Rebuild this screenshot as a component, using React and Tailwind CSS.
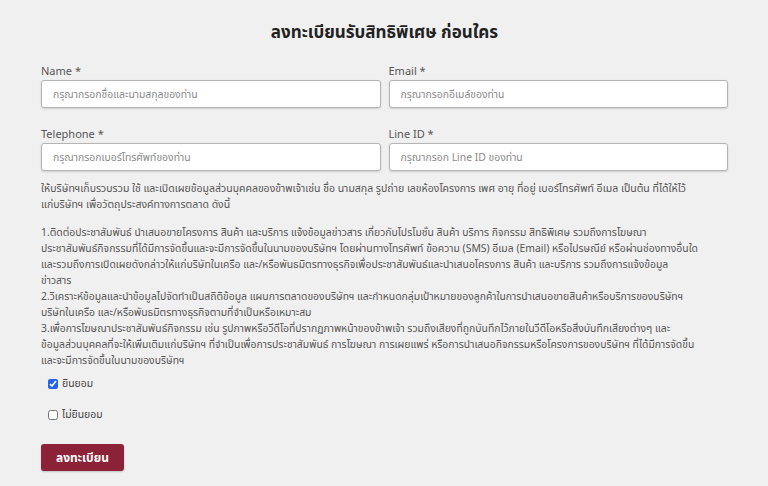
export default function App() {
  const font = { fontFamily: '"Noto Sans", "Noto Sans Thai", sans-serif' };
  const list = [
    "1.ติดต่อประชาสัมพันธ์ นำเสนอขายโครงการ สินค้า และบริการ แจ้งข้อมูลข่าวสาร เกี่ยวกับโปรโมชั่น สินค้า บริการ กิจกรรม สิทธิพิเศษ รวมถึงการโฆษณา",
    "ประชาสัมพันธ์กิจกรรมที่ได้มีการจัดขึ้นและจะมีการจัดขึ้นในนามของบริษัทฯ โดยผ่านทางโทรศัพท์ ข้อความ (SMS) อีเมล (Email) หรือไปรษณีย์ หรือผ่านช่องทางอื่นใด",
    "และรวมถึงการเปิดเผยดังกล่าวให้แก่บริษัทในเครือ และ/หรือพันธมิตรทางธุรกิจเพื่อประชาสัมพันธ์และนำเสนอโครงการ สินค้า และบริการ รวมถึงการแจ้งข้อมูล",
    "ข่าวสาร",
    "2.วิเคราะห์ข้อมูลและนำข้อมูลไปจัดทำเป็นสถิติข้อมูล แผนการตลาดของบริษัทฯ และกำหนดกลุ่มเป้าหมายของลูกค้าในการนำเสนอขายสินค้าหรือบริการของบริษัทฯ",
    "บริษัทในเครือ และ/หรือพันธมิตรทางธุรกิจตามที่จำเป็นหรือเหมาะสม",
    "3.เพื่อการโฆษณาประชาสัมพันธ์กิจกรรม เช่น รูปภาพหรือวีดีโอที่ปรากฏภาพหน้าของข้าพเจ้า รวมถึงเสียงที่ถูกบันทึกไว้ภายในวีดีโอหรือสิ่งบันทึกเสียงต่างๆ และ",
    "ข้อมูลส่วนบุคคลที่จะให้เพิ่มเติมแก่บริษัทฯ ที่จำเป็นเพื่อการประชาสัมพันธ์ การโฆษณา การเผยแพร่ หรือการนำเสนอกิจกรรมหรือโครงการของบริษัทฯ ที่ได้มีการจัดขึ้น",
    "และจะมีการจัดขึ้นในนามของบริษัทฯ",
  ];
  const Field = ({ label, ph }) => (
    <div className="flex flex-col">
      <label className="text-[11px] leading-[14px] font-normal text-[#555] mb-[2px]">{label}</label>
      <input
        className="h-[28px] w-full rounded-[3px] border border-[#b5b5b5] bg-white px-[11px] text-[10.4px] text-[#333] placeholder:text-[#8a8a8a] shadow-[0_1px_2px_rgba(0,0,0,0.15)] outline-none"
        placeholder={ph}
      />
    </div>
  );
  return (
    <div className="min-h-[486px] w-[768px] bg-[#f1f0f0] text-[#444]" style={font}>
      <div className="w-[687px] ml-[41px] pt-[21px]">
        <h1 className="text-center text-[17px] font-bold leading-[22px] text-[#222]">ลงทะเบียนรับสิทธิพิเศษ ก่อนใคร</h1>
        <div className="mt-[21px] grid grid-cols-2 gap-x-[8px] gap-y-[19px]">
          <Field label="Name *" ph="กรุณากรอกชื่อและนามสกุลของท่าน" />
          <Field label="Email *" ph="กรุณากรอกอีเมล์ของท่าน" />
          <Field label="Telephone *" ph="กรุณากรอกเบอร์โทรศัพท์ของท่าน" />
          <Field label="Line ID *" ph="กรุณากรอก Line ID ของท่าน" />
        </div>
        <p className="mt-[9px] text-[10.5px] leading-[16px] text-[#555] whitespace-nowrap">
          ให้บริษัทฯเก็บรวบรวม ใช้ และเปิดเผยข้อมูลส่วนบุคคลของข้าพเจ้าเช่น ชื่อ นามสกุล รูปถ่าย เลขห้องโครงการ เพศ อายุ ที่อยู่ เบอร์โทรศัพท์ อีเมล เป็นต้น ที่ได้ให้ไว้
          <br />
          แก่บริษัทฯ เพื่อวัตถุประสงค์ทางการตลาด ดังนี้
        </p>
        <div className="mt-[12px] text-[10.4px] leading-[16px] text-[#555] whitespace-nowrap">
          {list.map((l, i) => (
            <div key={i}>{l}</div>
          ))}
        </div>
        <div className="mt-[9px] flex flex-col gap-[18px] pl-[7px] text-[10.4px] text-[#444]">
          <label className="flex items-center gap-[4px] leading-[13px]">
            <input type="checkbox" defaultChecked className="m-0 h-[10px] w-[10px] accent-[#2563eb]" />
            ยินยอม
          </label>
          <label className="flex items-center gap-[4px] leading-[13px]">
            <input type="checkbox" className="m-0 h-[10px] w-[10px]" />
            ไม่ยินยอม
          </label>
        </div>
        <button className="mt-[23px] h-[27px] w-[83px] rounded-[3px] bg-[#8c2237] text-[12px] font-bold text-white shadow-[0_1px_2px_rgba(0,0,0,0.2)]">
          ลงทะเบียน
        </button>
      </div>
    </div>
  );
}
